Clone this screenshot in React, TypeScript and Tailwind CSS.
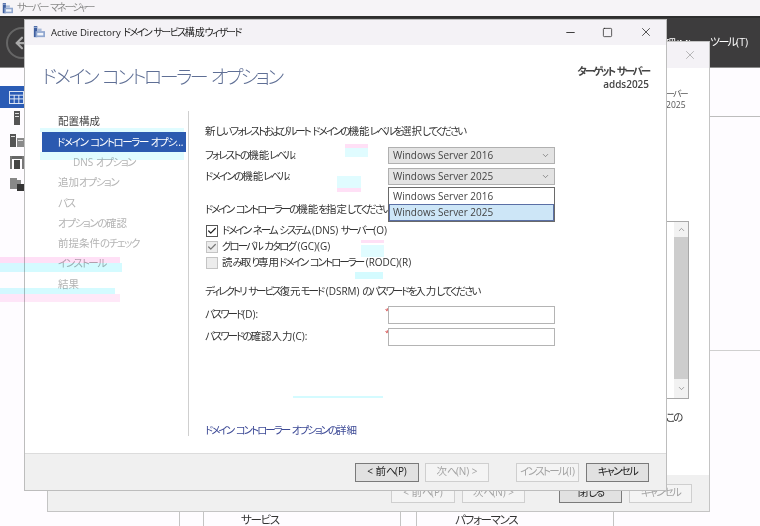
import { ArrowLeft, ChevronDown, ChevronUp, Check, Minus, Square, X } from "lucide-react";

function T({ s, kana = "tracking-[-0.19em]" }: { s: string; kana?: string }) {
  const parts = s.split(/([\u4e00-\u9fff]+|[\u3000-\u30ff\uff00-\uffef]+)/).filter((p) => p !== "");
  return (
    <>
      {parts.map((p, i) =>
        /[\u4e00-\u9fff]/.test(p) ? (
          <span key={i}>{p}</span>
        ) : /[\u3000-\u30ff\uff00-\uffef]/.test(p) ? (
          <span key={i} className={kana}>
            {p}
          </span>
        ) : (
          <span key={i} className="text-[0.95em]">
            {p}
          </span>
        )
      )}
    </>
  );
}

function AppIcon({ className }: { className: string }) {
  return (
    <svg viewBox="0 0 14 14" className={className}>
      <rect x="1" y="0" width="4" height="13" fill="#3f5f9f" />
      <rect x="1" y="1" width="4" height="1" fill="#b9c7e4" />
      <rect x="3" y="6" width="11" height="7" fill="#8fa6cf" />
      <rect x="5" y="8" width="7" height="3" fill="#f2f5fb" />
      <rect x="5" y="3" width="5" height="3" fill="#a9bad8" />
    </svg>
  );
}

function SideIcon({ kind }: { kind: number }) {
  if (kind === 0)
    return (
      <svg viewBox="0 0 16 14" className="w-[15px] h-[13px] ml-[9px]">
        <rect width="16" height="14" fill="#e8eef8" />
        <rect x="1" y="1" width="14" height="3" fill="#2a5bb5" />
        <rect x="1" y="5" width="4" height="3" fill="#2a5bb5" />
        <rect x="6" y="5" width="4" height="3" fill="#2a5bb5" />
        <rect x="11" y="5" width="4" height="3" fill="#2a5bb5" />
        <rect x="1" y="9" width="4" height="4" fill="#2a5bb5" />
        <rect x="6" y="9" width="4" height="4" fill="#2a5bb5" />
        <rect x="11" y="9" width="4" height="4" fill="#2a5bb5" />
      </svg>
    );
  if (kind === 1)
    return (
      <svg viewBox="0 0 14 14" className="w-[14px] h-[14px]">
        <rect x="4" y="0" width="6" height="14" fill="#555" />
        <rect x="5" y="2" width="4" height="1" fill="#ddd" />
        <rect x="5" y="5" width="4" height="1" fill="#ddd" />
      </svg>
    );
  if (kind === 2)
    return (
      <svg viewBox="0 0 14 14" className="w-[14px] h-[14px]">
        <rect x="0" y="1" width="6" height="13" fill="#555" />
        <rect x="7" y="5" width="7" height="9" fill="#8a8a8a" />
        <rect x="1" y="3" width="4" height="1" fill="#ddd" />
        <rect x="8" y="7" width="5" height="1" fill="#ddd" />
      </svg>
    );
  if (kind === 3)
    return (
      <svg viewBox="0 0 14 14" className="w-[14px] h-[14px]">
        <rect x="0" y="1" width="14" height="3" fill="#666" />
        <rect x="0" y="1" width="2" height="13" fill="#777" />
        <rect x="12" y="1" width="2" height="13" fill="#777" />
        <rect x="4" y="5" width="6" height="9" fill="#444" />
      </svg>
    );
  return (
    <svg viewBox="0 0 14 14" className="w-[14px] h-[14px]">
      <rect x="0" y="1" width="7" height="3" fill="#888" />
      <rect x="0" y="3" width="11" height="9" fill="#888" />
      <rect x="7" y="7" width="7" height="7" fill="#333" />
    </svg>
  );
}

function Btn({ label, on, w = "w-[64px]" }: { label: string; on?: boolean; w?: string }) {
  return (
    <div
      className={
        w +
        (on
          ? " h-[19px] shrink-0 flex items-center justify-center whitespace-nowrap border border-[#7a7a7a] bg-[#e1e1e1] text-[#222] text-[10.5px]"
          : " h-[19px] shrink-0 flex items-center justify-center whitespace-nowrap border border-[#cfcfcf] bg-[#f4f4f4] text-[#a3a3a3] text-[10.5px]")
      }
    >
      <span>
        <T s={label} kana="tracking-[-0.16em]" />
      </span>
    </div>
  );
}

function Combo({ label, value }: { label: string; value: string }) {
  return (
    <div className="flex items-center h-[17px]">
      <div className="w-[183px] text-[#333]">
        <T s={label} kana="tracking-[-0.17em]" />
      </div>
      <div className="w-[167px] h-[17px] flex items-center justify-between pl-[4px] pr-[4px] border border-[#b0b0b0] bg-[#e3e3e3] text-[#444]">
        <span>
          <T s={value} />
        </span>
        <ChevronDown size={9} strokeWidth={1.6} color="#555" />
      </div>
    </div>
  );
}

function Field({ label }: { label: string }) {
  return (
    <div className="flex items-center h-[18px]">
      <div className="w-[180px] text-[#333]">
        <T s={label} />
      </div>
      <div className="w-[3px] h-[18px] text-[8px] leading-[8px] text-[#d03030]">*</div>
      <div className="w-[167px] h-[18px] border border-[#b4b4b4] bg-white" />
    </div>
  );
}

function CheckRow({ label, mode }: { label: string; mode: "on" | "gray" | "off" }) {
  return (
    <div className="flex items-center h-[16px] text-[#333]">
      <div
        className={
          mode === "on"
            ? "w-[12px] h-[12px] ml-[1px] mr-[4px] border border-[#555] bg-white flex items-center justify-center"
            : "w-[12px] h-[12px] ml-[1px] mr-[4px] border border-[#c4c4c4] bg-[#ececec] flex items-center justify-center"
        }
      >
        {mode === "on" && <Check size={10} strokeWidth={3} color="#222" />}
        {mode === "gray" && <Check size={10} strokeWidth={3} color="#777" />}
      </div>
      <span>
        <T s={label} />
      </span>
    </div>
  );
}

const steps: [string, string][] = [
  ["配置構成", "pl-[16px] text-[#444]"],
  ["ドメイン コントローラー オプシ...", "pl-[15px] text-white bg-[#2b5ab0]"],
  ["DNS オプション", "pl-[31px] text-[#b4b4b4]"],
  ["追加オプション", "pl-[16px] text-[#b4b4b4]"],
  ["パス", "pl-[16px] text-[#b4b4b4]"],
  ["オプションの確認", "pl-[16px] text-[#b4b4b4]"],
  ["前提条件のチェック", "pl-[16px] text-[#b4b4b4]"],
  ["インストール", "pl-[16px] text-[#b4b4b4]"],
  ["結果", "pl-[16px] text-[#b4b4b4]"],
];

export default function App() {
  return (
    <div className="relative w-[760px] h-[526px] overflow-hidden bg-[#fefcff] text-[10.5px] [font-family:'Open_Sans','Noto_Sans_CJK_JP',sans-serif] [font-feature-settings:'palt']">
      {/* server manager */}
      <div className="flex items-center h-[16px] bg-[#f6f4f7] pl-[2px] gap-[4px] text-[10px] text-[#8a8a8a]">
        <AppIcon className="w-[11px] h-[11px]" />
        <span>
          <T s="サーバー マネージャー" kana="tracking-[-0.2em]" />
        </span>
      </div>
      <div className="flex items-center justify-end h-[52px] bg-[#3d3c3d] border-t-[2px] border-[#2e2e2e] border-b border-b-[#8a8a8a] pr-[12px] text-[11px] text-white">
        <span>
          <T s="ツール(T)" kana="tracking-[-0.16em]" />
        </span>
      </div>
      <div className="flex h-[458px]">
        <div className="w-[25px] flex flex-col pt-[18px]">
          <div className="h-[22px] bg-[#2a5bb5] flex items-center">
            <SideIcon kind={0} />
          </div>
          <div className="flex flex-col items-center gap-[8px] pt-[3px] pl-[9px]">
            <SideIcon kind={1} />
            <SideIcon kind={2} />
            <SideIcon kind={3} />
            <SideIcon kind={4} />
          </div>
        </div>
      </div>

      <div className="absolute left-[6px] top-[27px] w-[32px] h-[32px] rounded-full border-[2px] border-[#666] flex items-center justify-center">
        <ArrowLeft size={18} strokeWidth={3} color="#aaa" />
      </div>
      <div className="absolute left-[654px] top-[36px] text-[11px] text-white">
        <T s="管理(M)" />
      </div>
      {/* page lines behind the dialogs */}
      <div className="absolute left-[710px] top-[116px] w-[50px] h-px bg-[#bdbdbd]" />
      <div className="absolute left-[710px] top-[350px] w-[50px] h-px bg-[#d0d0d0]" />
      <div className="absolute left-[179px] top-[512px] w-px h-[14px] bg-[#c4c4c4]" />
      <div className="absolute left-[203px] top-[512px] w-px h-[14px] bg-[#c4c4c4]" />
      <div className="absolute left-[400px] top-[512px] w-px h-[14px] bg-[#c4c4c4]" />
      <div className="absolute left-[416px] top-[512px] w-px h-[14px] bg-[#c4c4c4]" />
      <div className="absolute left-[613px] top-[512px] w-px h-[14px] bg-[#c4c4c4]" />
      <div className="absolute left-[241px] top-[512px] text-[11.5px] leading-[16px] text-[#333]">
        <T s="サービス" kana="tracking-[-0.11em]" />
      </div>
      <div className="absolute left-[455px] top-[512px] text-[11.5px] leading-[16px] text-[#333]">
        <T s="パフォーマンス" kana="tracking-[-0.11em]" />
      </div>

      {/* middle window */}
      <div className="absolute left-[47px] top-[41px] w-[663px] h-[471px] flex flex-col border border-[#c4c4c4] bg-white">
        <div className="flex items-center justify-end h-[26px] bg-[#f4f2f6] pr-[12px]">
          <X size={14} strokeWidth={1} color="#8a8a8a" />
        </div>
        <div className="flex-1 flex justify-end pr-[20px]">
          <div className="w-[23px] pt-[20px] text-[9px] leading-[11px] text-[#555]">
            <div className="text-right pr-[4px] whitespace-nowrap">
              <T s="ーバー" />
            </div>
            <div className="text-right pr-[4px]">
              <T s="2025" />
            </div>
            <div className="mt-[110px] h-[178px] w-[23px] border border-l-0 border-[#a8a8a8] flex flex-col items-end">
              <div className="h-[15px] w-[14px] bg-[#f2f2f2] flex items-center justify-center">
                <ChevronUp size={9} color="#888" />
              </div>
              <div className="flex-1 w-[14px] bg-[#cdcdcd]" />
              <div className="h-[19px] w-[14px] bg-[#f2f2f2] flex items-center justify-center">
                <ChevronDown size={9} color="#888" />
              </div>
            </div>
            <div className="mt-[13px] text-[10.5px] text-[#333]">
              <T s="この" />
            </div>
          </div>
        </div>
        <div className="flex items-center justify-end gap-[7px] h-[36px] bg-[#f0f0f0] pr-[17px]">
          <Btn label="< 前へ(P)" />
          <Btn label="次へ(N) >" w="w-[63px]" />
          <div className="w-[20px]" />
          <Btn label="閉じる" on w="w-[63px]" />
          <Btn label="キャンセル" w="w-[63px]" />
        </div>
      </div>

      {/* wizard */}
      <div className="absolute left-[24px] top-[19px] w-[643px] h-[472px] flex flex-col border border-[#bdbdbd] bg-white">
        <div className="flex items-center h-[25px] bg-[#f4f2f6] pl-[8px] text-[10px] text-[#222]">
          <AppIcon className="w-[12px] h-[12px] mr-[6px]" />
          <span className="flex-1">
            <T s="Active Directory ドメイン サービス構成ウィザード" kana="tracking-[-0.16em]" />
          </span>
          <Minus size={13} strokeWidth={1.6} color="#222" className="mr-[25px]" />
          <Square size={11} strokeWidth={1.6} color="#222" className="mr-[26px]" />
          <X size={14} strokeWidth={1.3} color="#222" className="mr-[13px]" />
        </div>
        <div className="flex justify-between h-[67px] pl-[17px] pr-[17px]">
          <div className="pt-[19px] text-[19px] leading-[26px] font-light text-[#5f6f95]">
            <T s="ドメイン コントローラー オプション" kana="tracking-[-0.133em]" />
          </div>
          <div className="pt-[20px] text-right leading-[13px] font-semibold text-[#444]">
            <div>
              <T s="ターゲット サーバー" kana="tracking-[-0.2em]" />
            </div>
            <div>
              <T s="adds2025" />
            </div>
          </div>
        </div>
        <div className="flex h-[325px]">
          <div className="w-[164px] border-r border-[#cfcfcf] pl-[17px] pr-[2px]">
            {steps.map(([t, c]) => (
              <div key={t} className={"h-[20.3px] leading-[20px] whitespace-nowrap " + c}>
                <T s={t} kana="tracking-[-0.13em]" />
              </div>
            ))}
          </div>
          <div className="relative w-[350px] ml-[16px] flex flex-col">
            <div className="mt-[10px] h-[20px] leading-[20px] text-[#333]">
              <T s="新しいフォレストおよびルート ドメインの機能レベルを選択してください" />
            </div>
            <div className="mt-[6px]">
              <Combo label="フォレストの機能レベル:" value="Windows Server 2016" />
            </div>
            <div className="mt-[4px]">
              <Combo label="ドメインの機能レベル:" value="Windows Server 2025" />
            </div>
            <div className="mt-[14px] h-[20px] leading-[20px] text-[#333]">
              <T s="ドメイン コントローラーの機能を指定してください" />
            </div>
            <div className="mt-[4px]">
              <CheckRow label="ドメイン ネーム システム (DNS) サーバー(O)" mode="on" />
              <CheckRow label="グローバル カタログ (GC)(G)" mode="gray" />
              <CheckRow label="読み取り専用ドメイン コントローラー (RODC)(R)" mode="off" />
            </div>
            <div className="mt-[10px] h-[20px] leading-[20px] text-[#333]">
              <T s="ディレクトリ サービス復元モード (DSRM) のパスワードを入力してください" />
            </div>
            <div className="mt-[5px]">
              <Field label="パスワード(D):" />
            </div>
            <div className="mt-[4px]">
              <Field label="パスワードの確認入力(C):" />
            </div>
            <div className="mt-[77px] h-[14px] leading-[14px] text-[#3d4a96]">
              <T s="ドメイン コントローラー オプションの詳細" />
            </div>

            {/* open dropdown */}
            <div className="absolute left-[183px] top-[76px] w-[167px] h-[35px] border border-[#6a6a6a] bg-white text-[#444]">
              <div className="h-[16px] leading-[16px] pl-[4px]">
                <T s="Windows Server 2016" />
              </div>
              <div className="h-[17px] leading-[15px] pl-[3px] bg-[#cde6f7] border border-[#5a6fa5]">
                <T s="Windows Server 2025" />
              </div>
            </div>
          </div>
        </div>
        <div className="h-[17px]" />
        <div className="flex items-center justify-end h-[37px] bg-[#f0f0f0] border-t border-[#dcdcdc] pr-[17px]">
          <Btn label="< 前へ(P)" on />
          <div className="w-[6px]" />
          <Btn label="次へ(N) >" />
          <div className="w-[27px]" />
          <Btn label="インストール(I)" w="w-[63px]" />
          <div className="w-[7px]" />
          <Btn label="キャンセル" on w="w-[63px]" />
        </div>
      </div>

      {/* screen-capture ghost fragments over the windows */}
      <div className="absolute left-0 top-[257px] w-[120px] h-[6px] bg-[#ffe0f6] mix-blend-multiply" />
      <div className="absolute left-0 top-[263px] w-[122px] h-[9px] bg-[#d4fbff] mix-blend-multiply" />
      <div className="absolute left-0 top-[288px] w-[115px] h-[6px] bg-[#d4fbff] mix-blend-multiply" />
      <div className="absolute left-0 top-[294px] w-[120px] h-[8px] bg-[#ffe8f8] mix-blend-multiply" />
      <div className="absolute left-[40px] top-[128px] w-[144px] h-[4px] bg-[#e0fcff] mix-blend-multiply" />
      <div className="absolute left-[40px] top-[152px] w-[144px] h-[8px] bg-[#e0fcff] mix-blend-multiply" />
      <div className="absolute left-[345px] top-[144px] w-[23px] h-[4px] bg-[#ffe0f6] mix-blend-multiply" />
      <div className="absolute left-[345px] top-[148px] w-[23px] h-[9px] bg-[#e0fcff] mix-blend-multiply" />
      <div className="absolute left-[337px] top-[176px] w-[24px] h-[12px] bg-[#e0fcff] mix-blend-multiply" />
      <div className="absolute left-[337px] top-[188px] w-[24px] h-[4px] bg-[#ffe0f6] mix-blend-multiply" />
      <div className="absolute left-[361px] top-[240px] w-[23px] h-[3px] bg-[#ffe0f6] mix-blend-multiply" />
      <div className="absolute left-[361px] top-[245px] w-[23px] h-[12px] bg-[#e0fcff] mix-blend-multiply" />
      <div className="absolute left-[355px] top-[272px] w-[28px] h-[7px] bg-[#d4fbff] mix-blend-multiply" />
      <div className="absolute left-[293px] top-[396px] w-[90px] h-[2px] bg-[#d4fbff] mix-blend-multiply" />
    </div>
  );
}
